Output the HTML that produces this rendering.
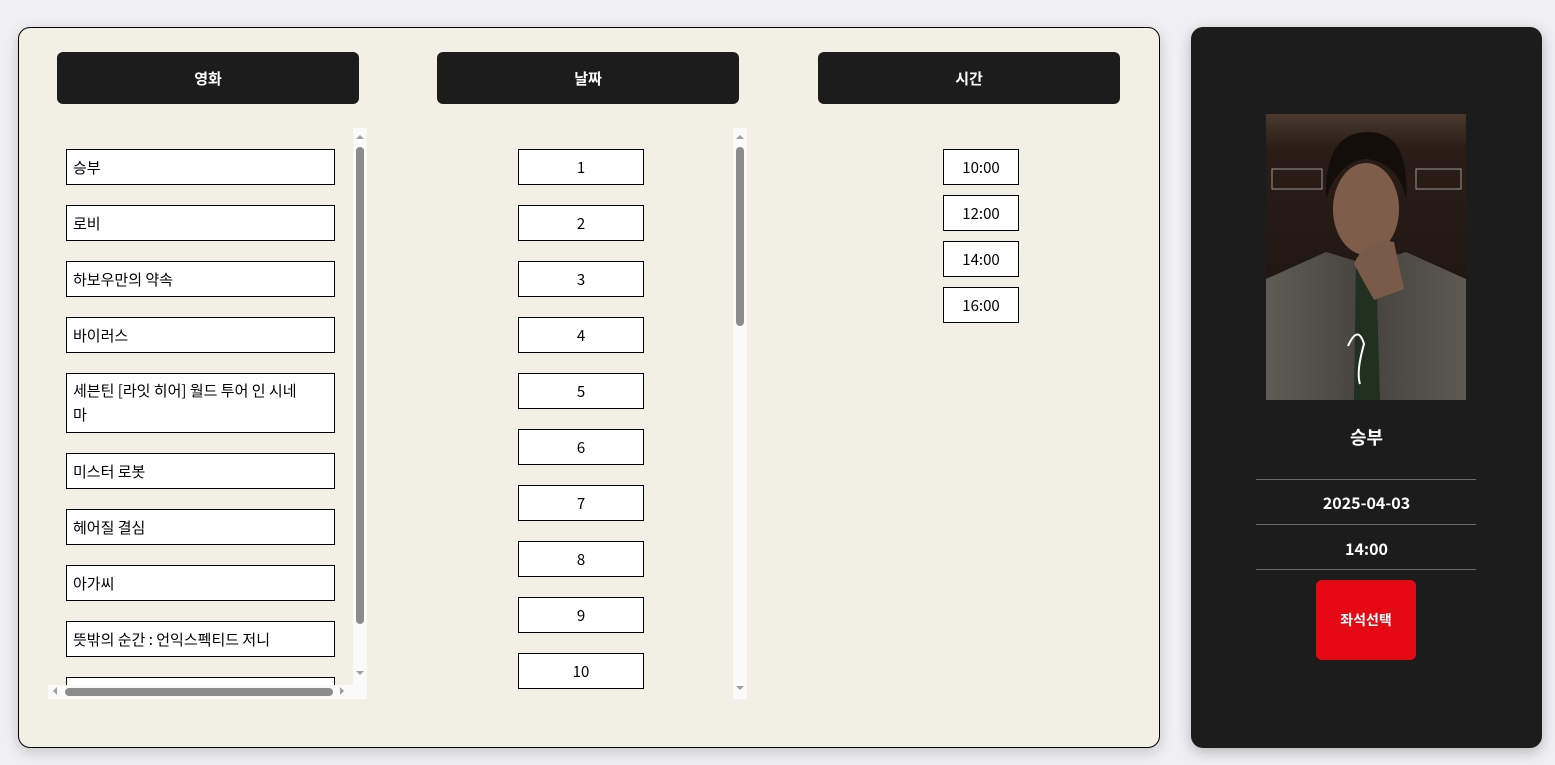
<!DOCTYPE html>
<html><head><meta charset="utf-8"><style>
*{box-sizing:border-box;margin:0;padding:0}
body{width:1555px;height:765px;background:#f0f0f3;font-family:"Noto Sans CJK KR","Liberation Sans",sans-serif;position:relative;overflow:hidden}
.main{position:absolute;left:18px;top:27px;width:1142px;height:721px;background:#f2efe4;border:1px solid #000;border-radius:12px;box-shadow:0 4px 14px rgba(0,0,0,.18)}
.side{position:absolute;left:1191px;top:27px;width:351px;height:721px;background:#1c1c1c;border-radius:12px;box-shadow:0 4px 14px rgba(0,0,0,.25)}
.hd{position:absolute;top:52px;width:302px;height:52px;background:#1c1c1c;border-radius:6px;color:#fff;font-weight:bold;font-size:15px;display:flex;align-items:center;justify-content:center}
.it{position:absolute;background:#fff;border:1px solid #000;font-size:15px;color:#000;display:flex;align-items:center}
.mv{left:66px;width:269px;height:36px;padding-left:6px}
.dt{left:518px;width:126px;height:36px;justify-content:center}
.tm{left:943px;width:76px;height:36px;justify-content:center}
.vs{position:absolute;width:14px;background:#fafafa}
.th{position:absolute;background:#8c8c8c;border-radius:4px}
.ar{position:absolute;width:0;height:0;border:4px solid transparent}
.ln{position:absolute;left:1256px;width:220px;height:1px;background:#6a6a6a}
.st{position:absolute;left:1191px;width:351px;text-align:center;color:#fff;font-weight:bold}
</style></head><body>
<div class="main"></div>
<div class="side"></div>
<div class="hd" style="left:57px">영화</div>
<div class="hd" style="left:437px">날짜</div>
<div class="hd" style="left:818px">시간</div>

<div style="position:absolute;left:48px;top:128px;width:305px;height:557px;overflow:hidden">
<div class="it mv" style="left:18px;top:21px">승부</div>
<div class="it mv" style="left:18px;top:77px">로비</div>
<div class="it mv" style="left:18px;top:133px">하보우만의 약속</div>
<div class="it mv" style="left:18px;top:189px">바이러스</div>
<div class="it mv" style="left:18px;top:245px;height:60px;line-height:24px">세븐틴 [라잇 히어] 월드 투어 인 시네<br>마</div>
<div class="it mv" style="left:18px;top:325px">미스터 로봇</div>
<div class="it mv" style="left:18px;top:381px">헤어질 결심</div>
<div class="it mv" style="left:18px;top:437px">아가씨</div>
<div class="it mv" style="left:18px;top:493px">뜻밖의 순간 : 언익스펙티드 저니</div>
<div class="it mv" style="left:18px;top:549px">기타</div>
</div>
<div class="vs" style="left:353px;top:128px;height:571px"></div>
<div class="th" style="left:356px;top:147px;width:8px;height:477px"></div>
<div class="ar" style="left:356px;top:131px;border-bottom-color:#a0a0a0"></div>
<div class="ar" style="left:356px;top:671px;border-top-color:#a0a0a0"></div>
<div style="position:absolute;left:48px;top:685px;width:305px;height:14px;background:#fafafa"></div>
<div class="th" style="left:65px;top:688px;width:268px;height:8px"></div>
<div class="ar" style="left:49px;top:687px;border-right-color:#a0a0a0"></div>
<div class="ar" style="left:340px;top:687px;border-left-color:#a0a0a0"></div>

<div class="it dt" style="top:149px">1</div>
<div class="it dt" style="top:205px">2</div>
<div class="it dt" style="top:261px">3</div>
<div class="it dt" style="top:317px">4</div>
<div class="it dt" style="top:373px">5</div>
<div class="it dt" style="top:429px">6</div>
<div class="it dt" style="top:485px">7</div>
<div class="it dt" style="top:541px">8</div>
<div class="it dt" style="top:597px">9</div>
<div class="it dt" style="top:653px">10</div>
<div class="vs" style="left:733px;top:128px;height:571px"></div>
<div class="th" style="left:736px;top:147px;width:8px;height:179px"></div>
<div class="ar" style="left:736px;top:131px;border-bottom-color:#a0a0a0"></div>
<div class="ar" style="left:736px;top:686px;border-top-color:#a0a0a0"></div>

<div class="it tm" style="top:149px">10:00</div>
<div class="it tm" style="top:195px">12:00</div>
<div class="it tm" style="top:241px">14:00</div>
<div class="it tm" style="top:287px">16:00</div>

<svg style="position:absolute;left:1266px;top:114px" width="200" height="286" viewBox="0 0 200 286">
<defs><linearGradient id="bg" x1="0" y1="0" x2="0" y2="1"><stop offset="0" stop-color="#4a3a2e"/><stop offset=".12" stop-color="#2a1d16"/><stop offset="1" stop-color="#1a1310"/></linearGradient>
<linearGradient id="su" x1="0" y1="0" x2="1" y2="0"><stop offset="0" stop-color="#5e5d55"/><stop offset=".5" stop-color="#44433d"/><stop offset="1" stop-color="#5c5a52"/></linearGradient></defs>
<rect width="200" height="286" fill="url(#bg)"/>
<rect x="6" y="55" width="50" height="20" fill="none" stroke="#999" stroke-width="1"/>
<rect x="150" y="55" width="45" height="20" fill="none" stroke="#999" stroke-width="1"/>
<path d="M0 165 L60 138 L100 150 L140 138 L200 165 L200 286 L0 286Z" fill="url(#su)"/>
<path d="M90 150 L110 150 L114 286 L88 286Z" fill="#22301f"/>
<ellipse cx="100" cy="95" rx="33" ry="46" fill="#7e5e4b"/>
<path d="M60 85 Q58 18 102 18 Q144 18 140 85 Q132 48 100 45 Q72 48 60 85Z" fill="#140e0b"/>
<path d="M88 150 Q100 122 128 128 L138 175 L108 186Z" fill="#7a5a48"/>
<path d="M82 232 Q92 210 98 230 Q90 258 94 270" stroke="#fff" stroke-width="2" fill="none"/>
</svg>

<div class="st" style="top:424px;font-size:18px">승부</div>
<div class="ln" style="top:479px"></div>
<div class="st" style="top:490px;font-size:16px">2025-04-03</div>
<div class="ln" style="top:524px"></div>
<div class="st" style="top:536px;font-size:16px">14:00</div>
<div class="ln" style="top:569px"></div>
<div style="position:absolute;left:1316px;top:580px;width:100px;height:80px;background:#e50914;border-radius:6px;color:#fff;font-weight:bold;font-size:14px;display:flex;align-items:center;justify-content:center">좌석선택</div>
</body></html>
